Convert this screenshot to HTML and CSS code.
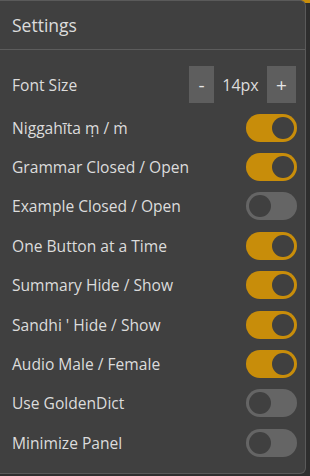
FILE: index.html
```html
<!DOCTYPE html>
<html lang="en">
<head>
    <meta charset="UTF-8">
    <meta name="viewport" content="width=device-width, initial-scale=1.0">
    <title>Settings</title>
    <link rel="stylesheet" href="styles.css">
</head>
<body>
<div class="backdrop-bar"></div>
<div class="panel">
    <div class="panel-header">Settings</div>
    <div class="panel-body">
        <div class="row font-row">
            <span class="label">Font Size</span>
            <div class="stepper">
                <button class="step-button minus">-</button>
                <span class="step-value">14px</span>
                <button class="step-button plus">+</button>
            </div>
        </div>
        <div class="row">
            <span class="label">Niggahīta ṃ / ṁ</span>
            <label class="switch on"><span class="knob"></span></label>
        </div>
        <div class="row">
            <span class="label">Grammar Closed / Open</span>
            <label class="switch on"><span class="knob"></span></label>
        </div>
        <div class="row">
            <span class="label">Example Closed / Open</span>
            <label class="switch"><span class="knob"></span></label>
        </div>
        <div class="row">
            <span class="label">One Button at a Time</span>
            <label class="switch on"><span class="knob"></span></label>
        </div>
        <div class="row">
            <span class="label">Summary Hide / Show</span>
            <label class="switch on"><span class="knob"></span></label>
        </div>
        <div class="row">
            <span class="label">Sandhi ' Hide / Show</span>
            <label class="switch on"><span class="knob"></span></label>
        </div>
        <div class="row">
            <span class="label">Audio Male / Female</span>
            <label class="switch on"><span class="knob"></span></label>
        </div>
        <div class="row">
            <span class="label">Use GoldenDict</span>
            <label class="switch"><span class="knob"></span></label>
        </div>
        <div class="row">
            <span class="label">Minimize Panel</span>
            <label class="switch"><span class="knob"></span></label>
        </div>
    </div>
</div>
</body>
</html>
```

FILE: styles.css
```css
* {
    box-sizing: border-box;
}

body {
    margin: 0;
    width: 310px;
    height: 476px;
    overflow: hidden;
    background-color: #2e2e2e;
    font-family: "Open Sans", "Noto Sans", sans-serif;
    position: relative;
}

.backdrop-bar {
    position: absolute;
    top: 0;
    right: 0;
    width: 38px;
    height: 3px;
    background-color: #c88d0a;
}

.panel {
    position: relative;
    width: 306px;
    height: 474px;
    background-color: #404040;
    border: 1px solid #5a5a5a;
    border-left: none;
    border-radius: 0 6px 6px 0;
    color: #dcdcdc;
}

.panel-header {
    height: 49px;
    padding: 0 12px;
    display: flex;
    align-items: center;
    font-size: 17.5px;
    border-bottom: 1px solid #5c5c5c;
}

.panel-body {
    padding-top: 16px;
}

.row {
    display: flex;
    align-items: center;
    justify-content: space-between;
    height: 39.4px;
    padding: 0 8px 0 12px;
    font-size: 15.6px;
}

.font-row {
    height: 37px;
    margin-bottom: 5px;
    padding-right: 9px;
}

.stepper {
    display: flex;
    align-items: center;
    height: 37px;
}

.step-button {
    height: 37px;
    padding: 0;
    border: none;
    background-color: #5e5e5e;
    color: #e6e6e6;
    font-family: inherit;
    font-size: 19px;
}

.minus {
    width: 25px;
}

.plus {
    width: 29px;
}

.step-value {
    width: 53px;
    text-align: center;
    font-size: 16px;
}

.switch {
    position: relative;
    width: 51px;
    height: 28px;
    border-radius: 14px;
    background-color: #656565;
}

.switch.on {
    background-color: #c88d0a;
}

.knob {
    position: absolute;
    top: 3px;
    left: 3px;
    width: 22px;
    height: 22px;
    border-radius: 50%;
    background-color: #404040;
}

.switch.on .knob {
    left: 26px;
}
```
